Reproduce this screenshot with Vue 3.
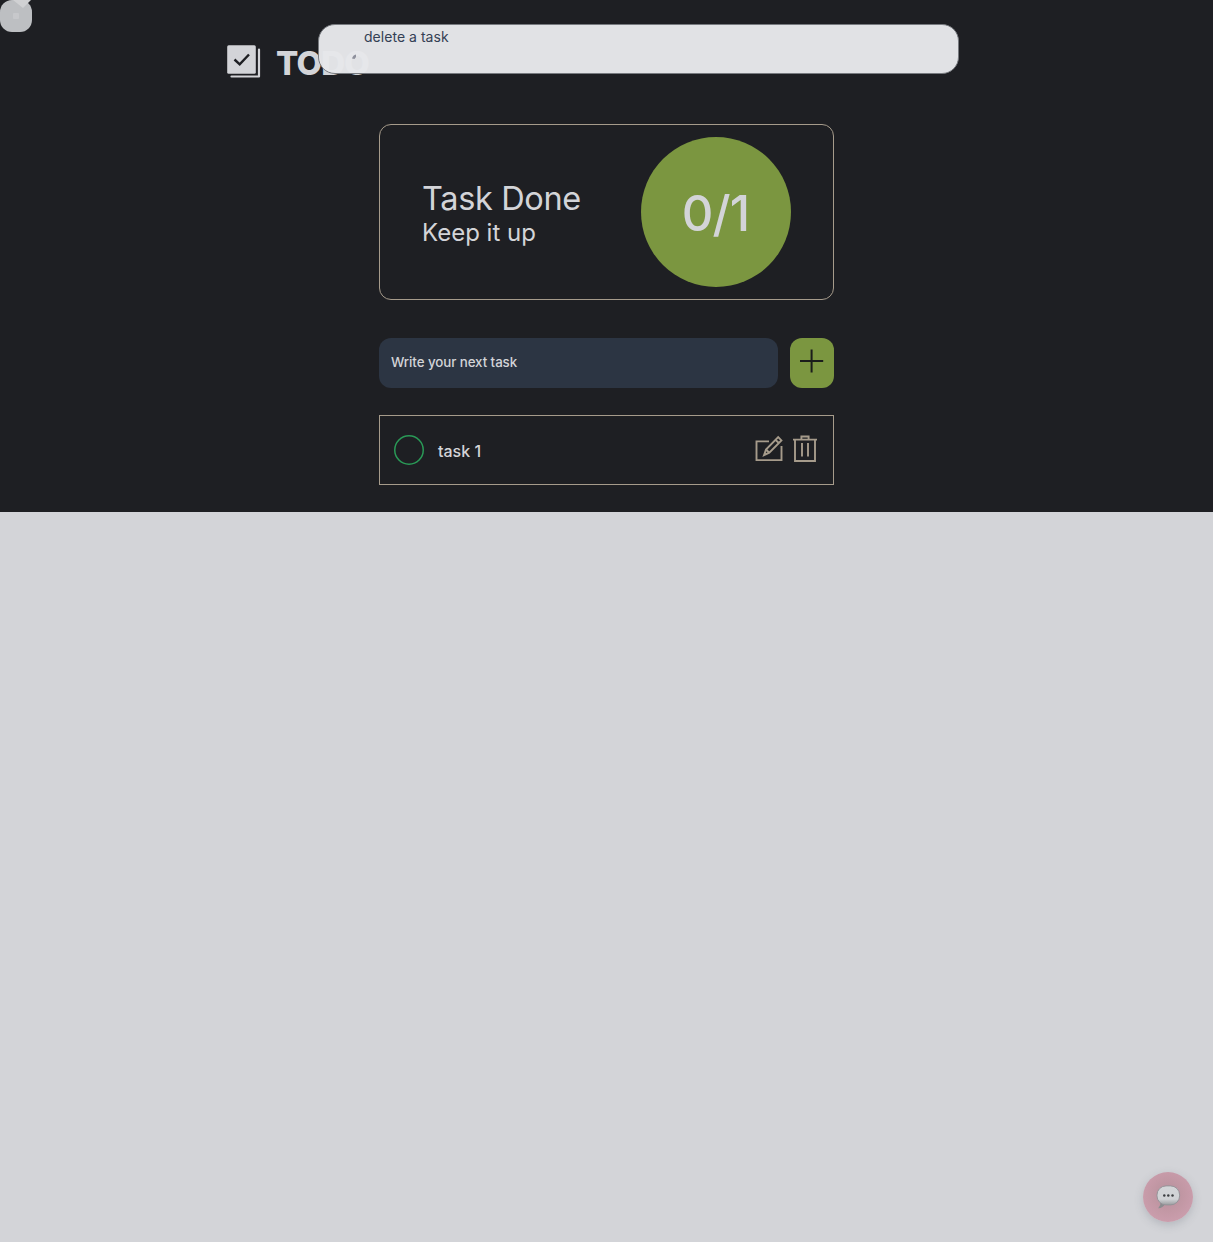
<script setup>
import { ref, computed } from 'vue'

const tasks = ref([{ id: 1, name: 'task 1', done: false }])
const draft = ref('')
const doneCount = computed(() => tasks.value.filter((t) => t.done).length)

function addTask() {
  const name = draft.value.trim()
  if (!name) return
  tasks.value.push({ id: Date.now(), name, done: false })
  draft.value = ''
}
function removeTask(id) {
  tasks.value = tasks.value.filter((t) => t.id !== id)
}
</script>

<template>
  <div class="page">
    <main class="app">
      <header class="brand">
        <svg class="logo" width="34" height="34" viewBox="0 0 34 34">
          <path d="M32 4.500V31.500H4.500" fill="none" stroke="#d3d4d8" stroke-width="2.200" stroke-linejoin="round" stroke-linecap="round" />
          <rect x="0.200" y="0.200" width="28.600" height="28.600" rx="1.500" fill="#d3d4d8" />
          <path d="M7.500 14.500L12.700 19.300L22 9.500" fill="none" stroke="#1e1f23" stroke-width="2.400" />
        </svg>
        <h1>TODO</h1>
      </header>

      <section class="summary">
        <div class="caption">
          <p class="title">Task Done</p>
          <p class="subtitle">Keep it up</p>
        </div>
        <div class="counter"><span>{{ doneCount }}/{{ tasks.length }}</span></div>
      </section>

      <form class="entry" @submit.prevent="addTask">
        <input v-model="draft" type="text" placeholder="Write your next task" />
        <button type="submit" aria-label="Add">
          <svg width="24" height="24" viewBox="0 0 24 24">
            <path d="M11.600 .5V23.500M0 12H23.200" stroke="#1b1d1b" stroke-width="2" fill="none" />
          </svg>
        </button>
      </form>

      <ul class="tasks">
        <li v-for="task in tasks" :key="task.id">
          <button class="check" aria-label="Complete" @click="task.done = !task.done"></button>
          <span class="name">{{ task.name }}</span>
          <button class="tool" aria-label="Edit">
            <svg width="28" height="28" viewBox="0 0 28 28" fill="none" stroke="#a69b8b" stroke-width="1.900">
              <path d="M14 6.400H1.500V25.100H26.500V11" />
              <path d="M9 20.200L11 14.500L23.200 2.200L26.400 5.400L14.300 17.700Z M20.600 4.800L23.800 8 M11 14.500L14.300 17.700" />
            </svg>
          </button>
          <button class="tool" aria-label="Delete" @click="removeTask(task.id)">
            <svg width="26" height="28" viewBox="0 0 26 28" fill="none" stroke="#a69b8b" stroke-width="1.900">
              <path d="M1 4.600H25M3 5V26H23V5M9.400 4V1.500H16.600V4M10 8V21.500M16 8V21.500" />
            </svg>
          </button>
        </li>
      </ul>
    </main>

    <div class="toast">
      <span>delete a task</span>
      <svg class="speck" width="5" height="6" viewBox="0 0 5 6"><path d="M0 4.500Q1 1 4 .5V3L2.500 5Z" fill="#8e909c" /></svg>
    </div>

    <div class="cursor">
      <svg width="32" height="32" viewBox="0 0 32 32">
        <path d="M13 0H31L23 8Z" fill="#d0d1d3" />
        <rect x="13" y="13" width="6" height="6" rx="1" fill="#c7c8cb" />
      </svg>
    </div>

    <button class="chat" aria-label="Chat">
      <svg width="26" height="28" viewBox="0 0 26 28">
        <defs>
          <linearGradient id="bubble" x1="0" y1="0" x2="0" y2="1">
            <stop offset="0" stop-color="#d3d5d8" />
            <stop offset=".7" stop-color="#d0d2d5" />
            <stop offset="1" stop-color="#9b9da0" />
          </linearGradient>
        </defs>
        <path d="M5.500 19Q6 22.500 3.200 25.200Q7.500 25.400 10.500 20.500Z" fill="#8b8c8f" />
        <rect x="2" y="2.900" width="22.600" height="19" rx="9" fill="url(#bubble)" stroke="#929397" stroke-width=".9" />
        <circle cx="9.300" cy="12.600" r="1.250" fill="#3c3e41" />
        <circle cx="13.300" cy="12.600" r="1.250" fill="#3c3e41" />
        <circle cx="17.500" cy="12.600" r="1.250" fill="#3c3e41" />
      </svg>
    </button>
  </div>
</template>

<style>
body {
  background: #d3d4d8;
}
</style>

<style scoped>
.page {
  min-height: 1242px;
  font-family: Inter, "Liberation Sans", sans-serif;
  color: #d3d4d8;
}
.page * {
  box-sizing: border-box;
}
.app {
  height: 512px;
  padding-top: 45px;
  background: #1e1f23;
}
.brand {
  display: flex;
  height: 36px;
  margin-left: 227px;
}
.logo {
  display: block;
}
h1 {
  margin: 0 0 0 15px;
  font-size: 33px;
  line-height: 36px;
  font-weight: 800;
  letter-spacing: -.8px;
}
.summary {
  width: 455px;
  height: 176px;
  margin: 43px 0 0 379px;
  padding: 0 42px;
  display: flex;
  align-items: center;
  justify-content: space-between;
  border: 1px solid #a69b8b;
  border-radius: 12px;
}
.caption {
  padding-top: 7px;
}
.caption p {
  margin: 0;
}
.title {
  font-size: 32.500px;
  line-height: 34px;
  letter-spacing: -.35px;
}
.subtitle {
  font-size: 24px;
  line-height: 34px;
}
.counter {
  width: 150px;
  height: 150px;
  padding: 3px 1px 0 0;
  display: flex;
  align-items: center;
  justify-content: center;
  border-radius: 50%;
  background: #7b9640;
  font-size: 49px;
  line-height: 60px;
  font-weight: 500;
  letter-spacing: -.9px;
}
.entry {
  display: flex;
  gap: 12px;
  width: 455px;
  margin: 38px 0 0 379px;
}
.entry input {
  flex: 1;
  min-width: 0;
  height: 50px;
  padding: 0 12px 2px;
  border: 0;
  border-radius: 12px;
  background: #2c3543;
  color: #d3d4d8;
  font: 500 13.333px Inter, sans-serif;
  letter-spacing: -.08px;
}
.entry input::placeholder {
  color: #d3d4d8;
}
.entry button {
  display: flex;
  justify-content: center;
  width: 44px;
  height: 50px;
  padding: 11px 0 0;
  border: 0;
  border-radius: 12px;
  background: #7b9640;
}
.tasks {
  width: 455px;
  margin: 27px 0 0 379px;
  padding: 0;
  list-style: none;
}
.tasks li {
  display: flex;
  align-items: center;
  height: 70px;
  padding: 0 15px 0 14px;
  border: 1px solid #a69b8b;
}
.check {
  width: 30px;
  height: 30px;
  padding: 0;
  border: 0;
  box-shadow: inset 0 0 0 1.500px #2a9a57;
  border-radius: 50%;
  background: none;
}
.name {
  flex: 1;
  margin-left: 14px;
  padding-top: 1px;
  font-size: 16px;
  line-height: 20px;
  font-weight: 500;
}
.tool {
  padding: 0 0 2px;
  border: 0;
  background: none;
  height: 30px;
}
.tool + .tool {
  margin-left: 9px;
}
.tool svg {
  display: block;
}
.toast {
  position: absolute;
  left: 318px;
  top: 24px;
  width: 641px;
  height: 50px;
  padding: 3px 0 0 45px;
  display: flex;
  flex-direction: column;
  border: 1px solid #777a7f;
  border-radius: 17px;
  background: rgba(230, 231, 235, .975);
  color: #344054;
  font-size: 14px;
  line-height: 18px;
  letter-spacing: .03px;
}
.speck {
  margin: 8px 0 0 -12px;
}
.cursor {
  position: absolute;
  left: 0;
  top: 0;
  width: 32px;
  height: 32px;
  border-radius: 12px;
  background: #bdbfc2;
}
.cursor svg {
  display: block;
}
.chat {
  position: absolute;
  left: 1143px;
  top: 1172px;
  width: 50px;
  height: 50px;
  padding: 0;
  display: flex;
  align-items: center;
  justify-content: center;
  border: 0;
  border-radius: 50%;
  background: radial-gradient(circle at 50% 45%, #b9929e 15%, #c398a5 45%, #ca9dac 72%);
  box-shadow: 0 3px 9px rgba(90, 100, 110, .25);
}
</style>
